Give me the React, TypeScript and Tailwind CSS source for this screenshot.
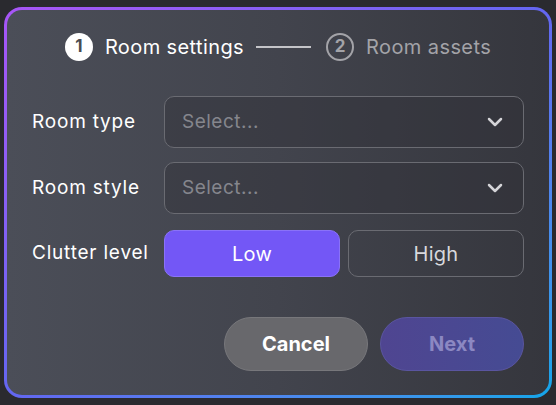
import React, { useState } from 'react';
import { ChevronDown } from 'lucide-react';

const font = { fontFamily: 'Inter, "Noto Sans", sans-serif' };

function SelectBox() {
  return (
    <button className="flex-1 h-[52px] flex items-center justify-between pl-[17px] pr-[16px] rounded-[10px] border border-[#6a6b72] bg-[#2f3036]/40 text-left">
      <span className="text-[19px] tracking-[0.5px] text-[#85868d]">Select...</span>
      <ChevronDown size={24} strokeWidth={2.5} className="text-[#d4d4d8]" />
    </button>
  );
}

export default function App() {
  const [clutter, setClutter] = useState<'low' | 'high'>('low');

  const opt = (on: boolean) =>
    on
      ? 'flex-1 h-[47px] rounded-[10px] text-[20px] tracking-[0.3px] bg-[#7357f6] border border-[#8a72f8] text-white'
      : 'flex-1 h-[47px] rounded-[10px] text-[20px] tracking-[0.3px] border border-[#6a6b72] text-[#d8d8dc]';

  return (
    <div style={font} className="w-[556px] h-[405px] bg-[#2a2a2f] pt-[7px] pl-[4px] overflow-hidden">
      <div className="w-[548px] h-[391px] rounded-[18px] p-[3px] bg-gradient-to-br from-[#a855f7] via-[#6366f1] to-[#0ea5e9]">
        <div className="w-full h-full rounded-[15px] bg-gradient-to-r from-[#4b4e58] via-[#42444d] to-[#35363d] px-[25px] pt-[22px]">
          {/* steps */}
          <div className="flex items-center justify-center">
            <div className="w-[28px] h-[28px] rounded-full bg-white flex items-center justify-center text-[17px] font-bold text-[#4a4b52]">1</div>
            <span className="ml-[12px] text-[20px] tracking-[0.4px] text-white">Room settings</span>
            <div className="ml-[12px] w-[55px] h-[2px] bg-[#c4c4c8]" />
            <div className="ml-[15px] w-[28px] h-[28px] rounded-full border-2 border-[#a3a3a8] flex items-center justify-center text-[17px] font-bold text-[#a3a3a8]">2</div>
            <span className="ml-[12px] text-[20px] tracking-[0.4px] text-[#a3a3a8]">Room assets</span>
          </div>

          <div className="mt-[34px] flex flex-col">
            <div className="flex items-center">
              <span className="w-[132px] text-[19px] tracking-[0.8px] text-white">Room type</span>
              <SelectBox />
            </div>
            <div className="flex items-center mt-[14px]">
              <span className="w-[132px] text-[19px] tracking-[0.8px] text-white">Room style</span>
              <SelectBox />
            </div>
            <div className="flex items-center mt-[16px]">
              <span className="w-[132px] text-[19px] tracking-[0.8px] text-white">Clutter level</span>
              <div className="flex-1 flex gap-[8px]">
                <button onClick={() => setClutter('low')} className={opt(clutter === 'low')}>
                  Low
                </button>
                <button onClick={() => setClutter('high')} className={opt(clutter === 'high')}>
                  High
                </button>
              </div>
            </div>
          </div>

          <div className="mt-[40px] flex justify-end gap-[12px]">
            <button className="w-[144px] h-[54px] rounded-full bg-[#68686c] border border-[#77777b] text-[20px] font-bold text-white">Cancel</button>
            <button className="w-[144px] h-[54px] rounded-full bg-gradient-to-r from-[#4f4591] to-[#454b93] border border-[#5a55a0] text-[20px] font-bold text-[#8c88c2]">Next</button>
          </div>
        </div>
      </div>
    </div>
  );
}
